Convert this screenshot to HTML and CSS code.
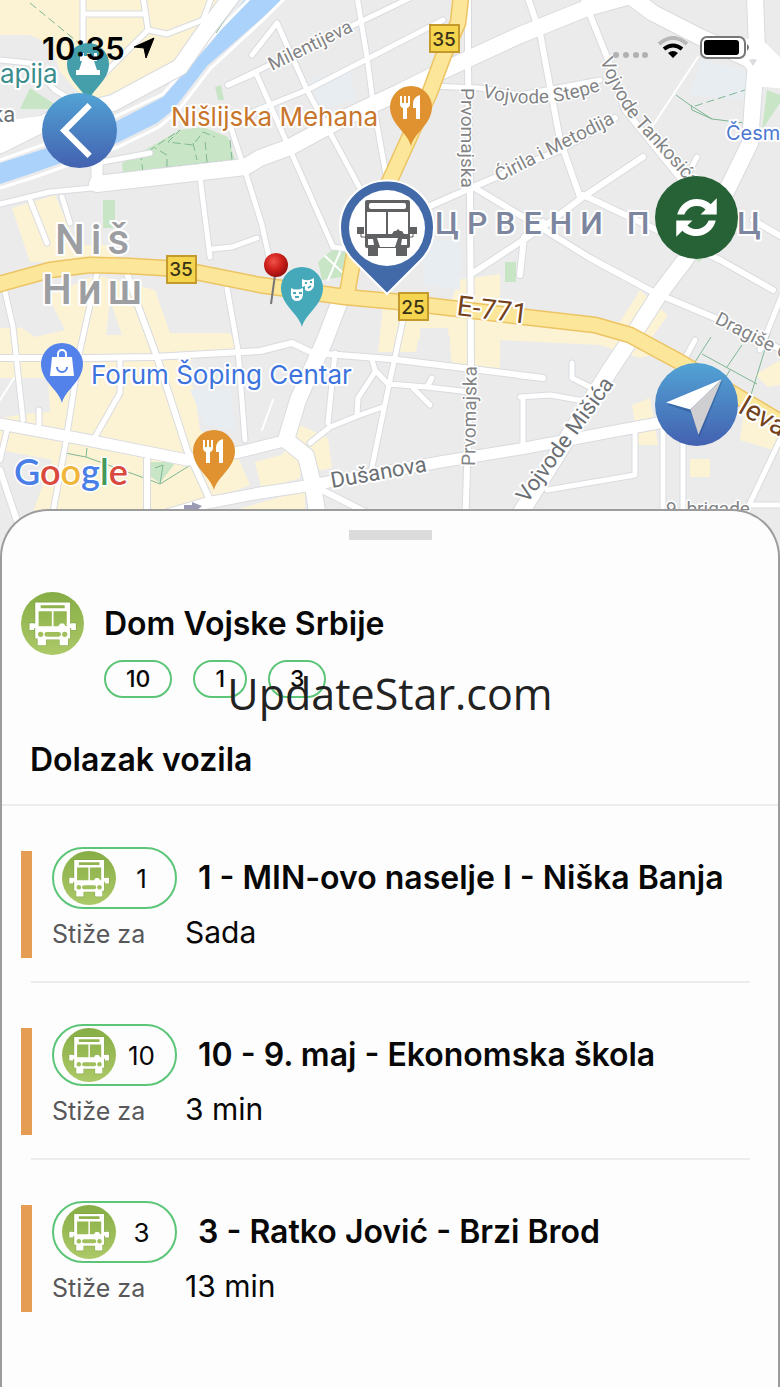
FILE: index.html
```html
<!DOCTYPE html>
<html lang="sr-Latn">
<head>
<meta charset="utf-8">
<meta name="viewport" content="width=device-width, initial-scale=1">
<title>Dom Vojske Srbije</title>
<link rel="stylesheet" href="styles.css">
</head>
<body>
<svg class="defs" aria-hidden="true">
  <defs>
    <linearGradient id="blue" x1="0" y1="0" x2="0" y2="1"><stop offset="0" stop-color="#52a3d5"/><stop offset="1" stop-color="#4361b0"/></linearGradient>
    <linearGradient id="green" x1="0" y1="0" x2="0" y2="1"><stop offset="0" stop-color="#86ad45"/><stop offset="1" stop-color="#adc968"/></linearGradient>
    <radialGradient id="red" cx=".4" cy=".35" r=".7"><stop offset="0" stop-color="#f0524a"/><stop offset=".5" stop-color="#cf211c"/><stop offset="1" stop-color="#8f0c0b"/></radialGradient>
    <symbol id="bus-badge" viewBox="0 0 186 186">
      <circle cx="93" cy="93" r="93" fill="url(#green)"/>
      <path fill="none" stroke="#5f822c" stroke-width="4" opacity=".35" d="M42 31h103v62h3v-1h14v20h-14v-6h-3v31h-6v20h-25v-17H74v17H49v-20h-7v-31h-3v6H25V92h14v1h3z"/>
      <path fill="#fff" fill-rule="evenodd" d="M42 31h103v62h3v-1h14v20h-14v-6h-3v31h-6v20h-25v-17H74v17H49v-20h-7v-31h-3v6H25V92h14v1h3zM52 57v44h39V57zM96 57v44h14l6-8 10 0 6 8h3V57zM58 39v9h71v-9zM58 117a8 8 0 1 0 .1 0zM129 117a8 8 0 1 0 .1 0zM76 118a7 7 0 0 0 0 14h35a7 7 0 0 0 0-14z"/>
    </symbol>
    <path id="pin" d="M0 39C-3 26-21 17-21 0A21 21 0 0 1 21 0C21 17 3 26 0 39z"/>
    <g id="cutlery" fill="#fff"><path d="M-11-11h2v7h2v-7h2v7h2v-7h2V-3q0 3-3 4v11h-4V1q-3-1-3-4zM2-3Q2-10 9-12V12H5V1H2z"/></g>
    <g id="minor">
      <path d="M5 292 13 327 23 420M97 273 80 350 65 447 53 512M120 360V393L95 437M227 288 238 350 245 440M7 430 0 460M39 410V424"/>
      <path d="M403 320 390 380 372 467M335 353 328 423M310 443 330 427 360 415 383 407M372 360 375 370 388 384 427 387 470 392M375 372 358 398 357 415M413 388 430 405M427 387 432 378"/>
      <path d="M357-4 367 57 373 103 387 180M277 23 307 90 362 192M277 23 252 55M256 73 287 143 333 247M228 85 290 55 360 22 410-2M252 112 307 90 443 20"/>
      <path d="M230 125 247 177 262 225 270 262M200 177 210 257M30 200 47 243M62 197 70 223M228 85 256 73M333 247 348 249M212 249 232 247 257 238"/>
      <path d="M83-2V45M83 14H145M143-4 148 30 167 34 203 20 212-4M148 30 100 78M0 60 30 63 55 90 80 105M97 163 150 153M0 204 50 192 92 188"/>
      <path d="M430 86 480 88 520 95 600 80M697 157 682 185M663 427V530M683 440V530M635 433V475L547 490M520 397 550 395 590 402M523 397V445M572 363V378L592 388M520 376 543 378M695 340 684 360M780 440 750 503 740 530M782 295 760 350M750 505H780"/>
    </g>
    <g id="medium">
      <path d="M0 358H88L153 357 260 351 292 343 313 353 390 359 480 370 543 378M127 273 137 303 157 357 187 450 210 500M147 460V530M468-2V67L470 190 471 370 467 470 465 530"/>
      <path d="M473 273 543 227 583 197 643 157M580 197 560 140 540 33 528-2M584 0 607 57 625 110 690 190M473 187 540 227 590 258 653 292 715 318 782 350M583 195 640 222 720 260 773 290M430 206 473 187 560 150 615 118M520 275 524 237 543 222M753 220 782 237M322 490 385 522M0 470 20 530"/>
    </g>
    <g id="major">
      <path d="M0 424 87 440 187 460 240 452 288 440M150 520 207 503 260 493 300 487 440 462 520 449 653 424 690 417M97 160V184"/>
    </g>
    <g id="avenue">
      <path d="M0 145 60 115 113 103 180 67 203 34 232-4M97 184 245 167 260 158 290 147 340 120 400 92 440 72 520 35 587 8 630-4 653 13 700 37 755 62"/>
      <path d="M755-4 757 50 753 100 750 143 727 190 685 260 660 293 630 340 610 370 510 530M757 62 785 80M341 298 325 340 298 400 286 440 306 456 312 480 320 530"/>
    </g>
    <g id="highway">
      <path d="M461-4 458 23 443 57 430 92 390 180 354 255 347 294M-4 285 50 270 90 265 130 266 180 269 260 285 345 297 400 302 525 317 595 325 630 335 680 362 784 424"/>
    </g>
  </defs>
</svg>

<main class="screen">
  <section class="map" aria-label="Mapa">
    <svg class="map-canvas" viewBox="0 0 780 560" preserveAspectRatio="xMidYMin slice" role="img" aria-label="Niš">
      <rect class="ground" width="780" height="560"/>
      <g class="blocks">
        <path d="M0 0H236L204 36 180 62 120 90 88 103 60 72 52 45 30 35H0z"/>
        <path d="M12 208 55 195 72 235 92 262H30zM62 245H112L120 262H72z"/>
        <path d="M0 328H35L38 300 96 275 155 290 170 333H230L238 350 190 360 200 430 235 450 250 485 205 503 150 520H30L52 460 0 450V418L50 410 48 378 0 378z"/>
        <path d="M383 307 452 300 458 280 500 274V312L560 313 620 322 640 290 655 305 668 315 650 340 665 352 640 358 600 345 500 340V368L452 365 448 328H420V352H378z"/>
        <path d="M282 455 300 425 328 438 332 468 290 476zM255 462 300 450V478L262 490zM200 520 305 490V520zM632 405 650 398 658 445H638zM690 459H710V477H690zM745 405 780 430V452L740 440zM755 375 780 360V385L768 387z"/>
      </g>
      <path class="ground" d="M5 286 40 280 65 330 35 337 10 320zM110 300 122 335H106zM0 378H45L50 412 0 415zM418 340 450 336V358H415zM5 460 35 456 30 520H0zM190 380 220 378 235 440 205 425z"/>
      <g class="haze"><path d="M700 60 745 70V100L690 95zM420 240H460V290L425 285zM190 390 230 388 235 430 205 425zM310 80 350 70 355 100 320 110z"/></g>
      <path class="river" d="M246-2H284L260 20 207 66 173 110 157 123 117 143 33 173 0 184V163L50 147 113 123 163 97 213 40z"/>
      <path class="bank" d="M285-2 263 20 210 69 177 112 159 127 118 147 35 177 0 188M250-2 215 34 163 94 110 119 48 143 0 160"/>
      <g class="parks">
        <path d="M122 163 180 130 203 127 228 137 235 160 123 175zM215 87 221 85 224 100 218 100zM20 109 30 88 62 109zM103 200H115V228H103zM318 262 333 249 350 252 342 277 322 280zM505 262H516V282H505zM150 462H176L160 483 151 477zM767 90 780 95V103L762 130zM692 258 703 257 700 262z"/>
      </g>
      <g class="trails">
        <path class="dashed" d="M30 3 80 44M143 172 141 158 150 150 180 130 168 142 193 145 203 132 215 137M143 172 170 167 232 160M167 167V155L155 148M207 162 205 140M193 143 197 160M230 140 232 160"/>
        <path d="M676 95 690 105 712 119 745 123M691 105 692 110 712 119M216 33 238 0M226 283V289M65 453 86 457 87 448M86 457 150 480 160 484 189 466M155 468 163 465 160 484M711 337 695 362M702 354 757 384M742 345 727 367M777 310 750 398M730 370 724 380"/>
        <path class="dashed" d="M695 106 745 90"/>
      </g>
      <g class="lines casing">
        <use href="#minor" class="w-minor"/><use href="#medium" class="w-medium"/><use href="#major" class="w-major"/><use href="#avenue" class="w-avenue"/>
      </g>
      <g class="lines road">
        <use href="#minor" class="w-minor"/><use href="#medium" class="w-medium"/><use href="#major" class="w-major"/><use href="#avenue" class="w-avenue"/>
        <path class="thin" d="M698 57 650 130M340 252 328 280M325 256 342 272M0 400 14 378M262 430 273 400"/>
        <path class="plaza" d="M0 122 45 116 60 122 0 146zM745 40 760 38 782 60V88L760 86 742 62z"/>
      </g>
      <path class="island" d="M749 60Q753 58 757 60L753 66z"/>
      <g class="lines highway-edge"><use href="#highway"/></g>
      <g class="lines highway-fill"><use href="#highway"/></g>
      <path fill="#9a9ab5" d="M184 505H192V502L202 506 196 511 192 509H184z"/>

      <g class="shields">
        <g><rect x="430" y="25" width="29" height="27"/><text x="444" y="46">35</text></g>
        <g><rect x="167" y="256" width="29" height="27"/><text x="181" y="276">35</text></g>
        <g><rect x="399" y="293" width="29" height="27"/><text x="413" y="314">25</text></g>
      </g>

      <g class="labels street">
        <text transform="translate(272 71) rotate(-26)">Milentijeva</text>
        <text transform="translate(461 88) rotate(90)">Prvomajska</text>
        <text transform="translate(475 466) rotate(-89)">Prvomajska</text>
        <path id="stepe" fill="none" d="M482 97Q545 114 612 86"/>
        <text><textPath href="#stepe">Vojvode Stepe</textPath></text>
        <text transform="translate(499 182) rotate(-27)">Ćirila i Metodija</text>
        <path id="tankosica" fill="none" d="M600 60Q618 108 642 132L696 192"/>
        <text><textPath href="#tankosica">Vojvode Tankosića</textPath></text>
        <text transform="translate(714 323) rotate(27)">Dragiše C</text>
        <text x="666" y="515">9. brigade</text>
      </g>
      <g class="labels avenue-name">
        <text transform="translate(332 488) rotate(-10)">Dušanova</text>
        <text transform="translate(527 504) rotate(-54)">Vojvode Mišića</text>
        <text x="-8" y="122">ka</text>
      </g>
      <g class="labels highway-name">
        <text transform="translate(456 315) rotate(7)">E-771</text>
        <text transform="translate(737 412) rotate(30)">levar</text>
      </g>
      <g class="labels city"><text x="55" y="254">Niš</text><text x="42" y="304">Ниш</text></g>
      <g class="labels district"><text x="435" y="234">ЦРВЕНИ П</text><text x="737" y="234">Ц</text></g>
      <text class="labels poi teal" x="0" y="83">apija</text>
      <text class="labels poi orange" x="171" y="126">Nišlijska Mehana</text>
      <text class="labels poi blue" x="91" y="384">Forum Šoping Centar</text>
      <text class="labels fountain" x="726" y="140">Česma</text>

      <g transform="translate(88 64)"><use href="#pin" fill="#459fab"/><path fill="#fff" d="M-8-11h4v3h3v-3h3v3h4v-3h3v8H6l3 9h3v5h-24V6h3l3-9h-2z"/></g>
      <g transform="translate(411 107)"><use href="#pin" fill="#df922f"/><use href="#cutlery"/></g>
      <g transform="translate(214 451)"><use href="#pin" fill="#df922f"/><use href="#cutlery"/></g>
      <g transform="translate(62 364)"><use href="#pin" fill="#5383ea"/><path fill="#fff" d="M-10-7H10L12 12H-12z"/><path fill="none" stroke="#fff" stroke-width="2" d="M-4-7v-3a4 4 0 0 1 8 0v3"/><path fill="none" stroke="#5383ea" stroke-width="2" d="M-5 3a5 5 0 0 0 10 0"/></g>
      <g transform="translate(302 288)"><use href="#pin" fill="#46a9ba"/><path fill="#fff" d="M-11 0q5 3 12 0v7q-1 6-6 6t-6-6z"/><path fill="#fff" d="M0-9q6 3 12-1v8q-2 6-7 5l-2-1V-2l-3 1z"/><path stroke="#46a9ba" stroke-width="2" fill="none" d="M-9 5h3M-3 5h3M-7 9h4M3-5h2M8-6h2M6 0l3-2"/></g>
      <path stroke="#777" stroke-width="2" d="M275 275 271 304"/><circle cx="276" cy="265" r="12" fill="url(#red)"/>

      <g>
        <path fill="#426aa8" stroke="#fff" stroke-width="2" d="M387 294 353 260A47 47 0 1 1 421 260z"/>
        <circle cx="387" cy="228" r="38" fill="#fff"/>
        <g fill="#606163">
          <rect x="365" y="200" width="45" height="48" rx="2"/>
          <path d="M368 247H378V256H368zM396 247H407V256H396zM357 227H364V234H357zM410 227H417V234H410z"/>
          <path fill="none" stroke="#606163" d="M361 234V237H366M413 234V237H408"/>
        </g>
        <g fill="#fff">
          <rect x="369" y="203" width="37" height="6" rx="2"/>
          <path d="M367 212H386V234H367zM388 212H408V234H404L402 231H400L398 229 396 231H394L392 234H388zM368 239H373L374 245H368zM402 239H407V245H401zM377 238H398L395 247H380z"/>
        </g>
      </g>

      <text class="wordmark" x="14" y="485"><tspan class="g-blue">G</tspan><tspan class="g-red">o</tspan><tspan class="g-yellow">o</tspan><tspan class="g-blue">g</tspan><tspan class="g-green">l</tspan><tspan class="g-red">e</tspan></text>
    </svg>

    <div class="status-bar">
      <span class="clock">10:35
        <svg width="22" height="22" viewBox="0 0 22 22" aria-hidden="true"><path d="M1 10 21 1 13 21 11 11z" fill="#000" stroke="#000" stroke-linejoin="round"/></svg>
      </span>
      <svg class="indicators" width="138" height="24" viewBox="0 0 138 24" aria-hidden="true">
        <g fill="#b1b1b3"><circle cx="4" cy="19" r="3"/><circle cx="14" cy="19" r="3"/><circle cx="24" cy="19" r="3"/><circle cx="33" cy="19" r="3"/></g>
        <g fill="none"><path stroke="#b8b8b9" stroke-width="4" d="M47 8Q61-4 75 8"/><path stroke="#000" stroke-width="4" d="M52 13Q61 6 70 13"/></g>
        <path d="M56 17Q61 13 66 17L61 22z"/>
        <rect x="89" y="1" width="44" height="21" rx="6" fill="#fff" stroke="#777" stroke-width="2"/><rect x="92" y="4" width="35" height="15" rx="3"/><path fill="#777" d="M135 8q4 3 0 7z"/>
      </svg>
    </div>

    <button class="round back" type="button" aria-label="Nazad">
      <svg viewBox="0 0 74 74"><circle cx="37" cy="37" r="37" fill="url(#blue)"/><path d="M47 12 22 37 47 62" fill="none" stroke="#fff" stroke-width="6"/></svg>
    </button>
    <button class="round refresh" type="button" aria-label="Osveži">
      <svg viewBox="0 0 82 82"><circle cx="41" cy="41" r="41" fill="#276236"/><g id="arc" fill="#fff"><path d="M22 38A20 20 0 0 1 55 28L61 22V38H45L50 33A13 13 0 0 0 29 38z"/></g><use href="#arc" transform="rotate(180 41 41)"/></svg>
    </button>
    <button class="round locate" type="button" aria-label="Moja lokacija">
      <svg viewBox="0 0 82 82"><circle cx="41" cy="41" r="41" fill="url(#blue)"/><path fill="#1d3f78" opacity=".35" d="M67 17 44 73 35 49 12 41z"/><path fill="#fff" d="M66 16 11 39 35 46z"/><path fill="#cfcfd1" d="M66 16 35 46 43 71z"/></svg>
    </button>
  </section>

  <section class="sheet">
    <div class="handle"></div>
    <header class="stop">
      <svg class="stop-icon" aria-hidden="true"><use href="#bus-badge"/></svg>
      <h1>Dom Vojske Srbije</h1>
      <ul class="lines-served"><li>10</li><li>1</li><li>3</li></ul>
    </header>
    <h2>Dolazak vozila</h2>
    <ul class="arrivals">
      <li>
        <div class="pill"><svg aria-hidden="true"><use href="#bus-badge"/></svg><span>1</span></div>
        <h3>1 - MIN-ovo naselje I - Niška Banja</h3>
        <span class="caption">Stiže za</span><span class="eta">Sada</span>
      </li>
      <li>
        <div class="pill"><svg aria-hidden="true"><use href="#bus-badge"/></svg><span>10</span></div>
        <h3>10 - 9. maj - Ekonomska škola</h3>
        <span class="caption">Stiže za</span><span class="eta">3 min</span>
      </li>
      <li>
        <div class="pill"><svg aria-hidden="true"><use href="#bus-badge"/></svg><span>3</span></div>
        <h3>3 - Ratko Jović - Brzi Brod</h3>
        <span class="caption">Stiže za</span><span class="eta">13 min</span>
      </li>
    </ul>
  </section>
  <div class="watermark">UpdateStar.com</div>
</main>
</body>
</html>
```
FILE: styles.css
```css
* { box-sizing: border-box; }

body {
  margin: 0;
  background: #fdfdfd;
  color: #080808;
  font-family: Inter, "Liberation Sans", sans-serif;
}

h1, h2, h3, ul { margin: 0; padding: 0; }
h1, h2, h3 { font-size: 32px; font-weight: 600; line-height: 40px; }
ul { list-style: none; }

.defs { position: absolute; width: 0; height: 0; }

.screen {
  position: relative;
  display: flex;
  flex-direction: column;
  min-height: 100vh;
  overflow: hidden;
}

/* Map */
.map { position: relative; height: 560px; overflow: hidden; }
.map-canvas { display: block; width: 100%; height: 100%; }
.ground { fill: #ebebec; }
.blocks { fill: #fcf3d5; }
.haze { fill: #e8edf2; }
.river { fill: #abd2fb; }
.bank { fill: none; stroke: #fff; stroke-width: 3; }
.parks { fill: #c8e6c5; }
.trails { fill: none; stroke: #7fb795; stroke-width: 1; }
.dashed { stroke-dasharray: 8 4; }

.lines { fill: none; stroke-linecap: round; stroke-linejoin: round; }
.casing { stroke: #d9dbdf; }
.casing .w-minor { stroke-width: 7; }
.casing .w-medium { stroke-width: 8; }
.casing .w-major { stroke-width: 13; }
.casing .w-avenue { stroke-width: 18; }
.road { stroke: #fff; }
.road .w-minor { stroke-width: 5; }
.road .w-medium { stroke-width: 6; }
.road .w-major { stroke-width: 11; }
.road .w-avenue { stroke-width: 16; }
.road .thin { stroke-width: 2; }
.road .plaza { fill: #fff; }
.island { fill: #dcdde0; }
.highway-edge { stroke: #ecc463; stroke-width: 17; }
.highway-fill { stroke: #fbe699; stroke-width: 14; }

.shields rect { fill: #f5d54f; stroke: #c39a2b; stroke-width: 2; }
.shields text { fill: #3a3216; font-size: 19px; font-weight: 500; text-anchor: middle; }

.labels { paint-order: stroke; stroke: #fff; stroke-width: 4px; stroke-linejoin: round; }
.street { fill: #838486; font-family: Roboto, sans-serif; font-size: 19px; stroke-width: 3px; }
.street path { stroke: none; }
.avenue-name { fill: #6b6f73; font-family: Roboto, sans-serif; font-size: 22px; }
.highway-name { fill: #74421a; font-family: Roboto, sans-serif; font-size: 28px; }
.city { fill: #9c9ea2; font-family: Roboto, sans-serif; font-size: 42px; font-weight: 500; letter-spacing: 6px; }
.district { fill: #7d869f; font-family: Roboto, sans-serif; font-size: 32px; font-weight: 500; letter-spacing: 8px; }
.poi { font-size: 26px; }
.teal { fill: #3c8d8e; }
.orange { fill: #c8762c; }
.blue { fill: #3c73dc; }
.fountain { fill: #4b78d0; font-size: 20px; }

.wordmark { font-family: Lato, sans-serif; font-size: 36px; font-weight: 600; paint-order: stroke; stroke: #fff; stroke-width: 3px; }
.g-blue { fill: #4a7fe8; }
.g-red { fill: #d94a3d; }
.g-yellow { fill: #efb63a; }
.g-green { fill: #43985a; }

.status-bar {
  position: absolute;
  inset: 32px 30px auto 42px;
  display: flex;
  justify-content: space-between;
  align-items: center;
  height: 32px;
}
.clock { display: flex; align-items: center; gap: 8px; color: #000; font-size: 31px; font-weight: 600; }

.round { position: absolute; padding: 0; border: 0; border-radius: 50%; background: none; cursor: pointer; }
.round svg { display: block; width: 100%; height: 100%; }
.back { top: 93px; left: 42px; width: 75px; height: 75px; }
.refresh, .locate { right: 42px; width: 83px; height: 83px; }
.refresh { top: 176px; }
.locate { top: 363px; }

/* Bottom sheet */
.sheet {
  position: relative;
  flex: 1;
  margin-top: -51px;
  padding-top: 19px;
  border: 2px solid #9c9c9c;
  border-bottom: 0;
  border-radius: 48px 48px 0 0;
  background: #fdfdfd;
}
.handle { width: 83px; height: 10px; margin: 0 auto; background: #dbdbdb; }

.stop {
  display: grid;
  grid-template-columns: 63px 1fr;
  column-gap: 20px;
  row-gap: 5px;
  align-items: center;
  padding: 52px 19px 0;
}
.stop-icon { width: 63px; height: 63px; }
.lines-served { grid-column: 2; display: flex; gap: 21px; }
.lines-served li {
  padding: 0 20px;
  border: 2px solid #5cc578;
  border-radius: 19px;
  font-size: 23px;
  font-weight: 500;
  line-height: 34px;
}
.sheet h2 { padding: 42px 28px 24px; border-bottom: 2px solid #ececec; }

.arrivals li {
  position: relative;
  display: grid;
  grid-template-columns: 125px 1fr;
  row-gap: 5px;
  align-content: start;
  align-items: center;
  padding: 41px 30px 0 50px;
  height: 177px;
}
.arrivals li::before {
  content: "";
  position: absolute;
  top: 45px;
  left: 19px;
  width: 11px;
  height: 107px;
  background: #e59d54;
}
.arrivals li:not(:last-child)::after {
  content: "";
  position: absolute;
  inset: auto 28px 0 29px;
  height: 2px;
  background: #ececec;
}
.pill {
  display: flex;
  align-items: center;
  height: 62px;
  padding: 0 8px;
  border: 2px solid #5cc578;
  border-radius: 31px;
}
.pill svg { width: 54px; height: 54px; }
.pill span { flex: 1; font-size: 26px; text-align: center; }
.arrivals h3 { padding-left: 21px; white-space: nowrap; }
.caption, .eta { align-self: baseline; line-height: 36px; }
.caption { color: #58585a; font-size: 25px; }
.eta { padding-left: 8px; font-size: 30px; }

.watermark {
  position: absolute;
  top: 50%;
  left: 50%;
  transform: translate(-50%, -50%);
  color: #222;
  font-family: "Open Sans", sans-serif;
  font-size: 43px;
  line-height: 60px;
}
```
